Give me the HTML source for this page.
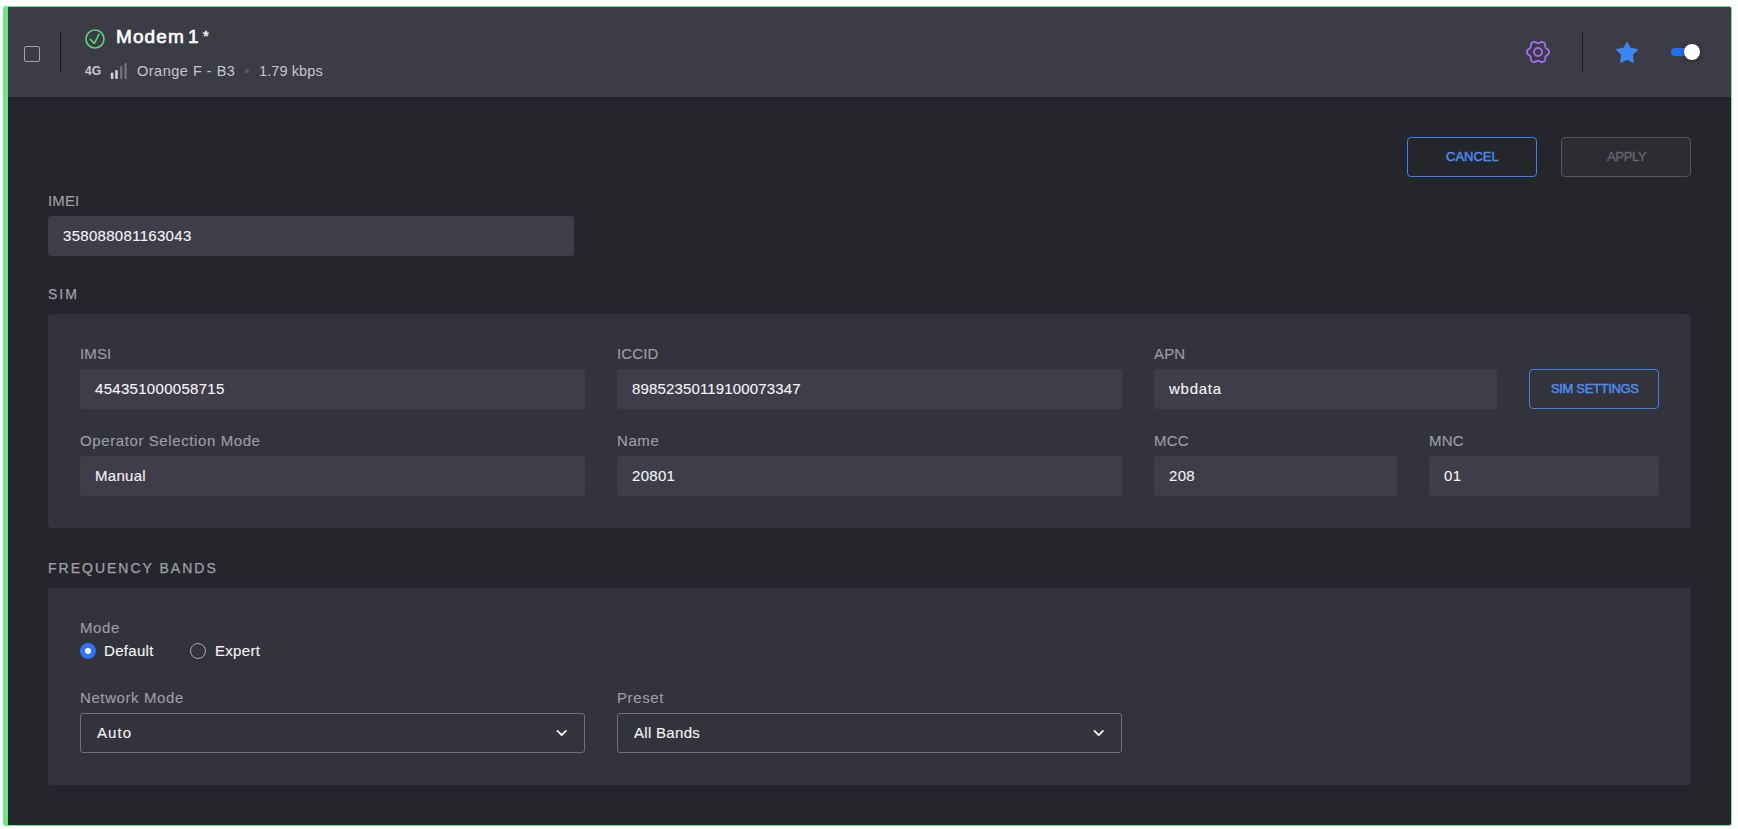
<!DOCTYPE html>
<html><head><meta charset="utf-8">
<style>
*{margin:0;padding:0;box-sizing:border-box}
html,body{width:1738px;height:829px;background:#fff;overflow:hidden;font-family:"Liberation Sans",sans-serif}
.a{position:absolute}
.t{position:absolute;white-space:nowrap;line-height:1}
#card{left:3px;top:6px;width:1729px;height:820px;border:1px solid #6de688;border-left:5px solid #6de688;border-radius:3px;background:#25262b;overflow:hidden}
#hdr{left:8px;top:7px;width:1723px;height:90px;background:#3c3c47;border-radius:0 2px 0 0}
.lbl{color:#9d9da5;font-size:15px;letter-spacing:0.6px;-webkit-text-stroke:0.15px #9d9da5}
.val{color:#f4f4f6;font-size:15px;letter-spacing:0.3px;-webkit-text-stroke:0.12px #f4f4f6}
.cap{letter-spacing:0.15px}
.inp{position:absolute;background:#3e3d49;border-radius:3px;height:40px}
.panel{position:absolute;background:#33333b;border-radius:4px}
.sel{position:absolute;border:1px solid #71717e;border-radius:3px;height:40px}
.btn{position:absolute;border:1px solid #3f82ec;border-radius:4px;height:40px}
.sec{color:#a0a0a8;font-size:14px;letter-spacing:2px;-webkit-text-stroke:0.25px #a0a0a8}
</style></head><body>
<div id="card" class="a"></div>
<div id="hdr" class="a"></div>

<!-- header -->
<div class="a" style="left:24px;top:46px;width:16px;height:16px;border:1px solid #a4a4ab;border-radius:2px"></div>
<div class="a" style="left:60px;top:32px;width:1px;height:40px;background:#1c1c20"></div>
<svg class="a" style="left:85px;top:29px" width="20" height="20" viewBox="0 0 20 20"><circle cx="10" cy="10" r="9" fill="none" stroke="#5fd57c" stroke-width="1.6"/><path d="M5.3 10.4 L9.3 14.4 L14 5.4" fill="none" stroke="#5fd57c" stroke-width="1.6" stroke-linecap="round" stroke-linejoin="round"/></svg>
<div class="t" style="left:116px;top:27px;font-size:19px;letter-spacing:1.1px;-webkit-text-stroke:0.65px #fff;color:#fff">Modem</div>
<div class="t" style="left:188px;top:27px;font-size:19px;-webkit-text-stroke:0.65px #fff;color:#fff">1</div>
<div class="t" style="left:203px;top:27.5px;font-size:15px;-webkit-text-stroke:0.4px #fff;color:#fff">*</div>
<div class="t" style="left:85px;top:65px;font-size:12px;font-weight:bold;color:#c9c9d1">4G</div>
<svg class="a" style="left:110px;top:62px" width="18" height="18" viewBox="0 0 18 18">
<rect x="0.8" y="10.5" width="2.6" height="6.5" rx="1" fill="#d0d0d8"/><rect x="5.2" y="8" width="2.6" height="9" rx="1" fill="#d0d0d8"/><rect x="10.1" y="4" width="2.2" height="13" rx="1" fill="#74747e"/><rect x="14.5" y="1" width="2.2" height="16" rx="1" fill="#74747e"/></svg>
<div class="t" style="left:137px;top:64px;font-size:14.5px;letter-spacing:0.5px;color:#c6c6d2">Orange F - B3</div>
<div class="a" style="left:245px;top:69px;width:4px;height:4px;border-radius:2px;background:#5c5c66"></div>
<div class="t" style="left:259px;top:64px;font-size:14.5px;letter-spacing:0.1px;color:#c6c6d2">1.79 kbps</div>

<svg class="a" style="left:1526px;top:40px" width="24" height="24" viewBox="0 0 24 24"><path fill="none" stroke="#a46ef0" stroke-width="1.8" d="M23.05 12.00 L23.04 11.71 L23.01 11.42 L22.95 11.14 L22.87 10.86 L22.77 10.58 L22.65 10.31 L22.50 10.05 L22.31 9.81 L22.07 9.58 L21.56 9.44 L21.39 9.22 L21.18 9.02 L20.94 8.83 L20.70 8.66 L20.47 8.49 L20.25 8.33 L20.04 8.16 L19.86 7.99 L19.71 7.82 L19.58 7.63 L19.48 7.42 L19.40 7.19 L19.34 6.95 L19.30 6.69 L19.27 6.42 L19.25 6.13 L19.21 5.84 L19.17 5.54 L19.11 5.26 L19.00 5.00 L19.13 4.49 L19.05 4.17 L18.93 3.88 L18.79 3.62 L18.62 3.38 L18.43 3.15 L18.22 2.95 L18.00 2.76 L17.77 2.58 L17.53 2.43 L17.27 2.30 L17.00 2.18 L16.73 2.08 L16.45 2.01 L16.16 1.96 L15.86 1.93 L15.56 1.94 L15.26 1.98 L14.94 2.07 L14.56 2.44 L14.29 2.47 L14.01 2.56 L13.73 2.67 L13.46 2.79 L13.20 2.91 L12.94 3.02 L12.70 3.12 L12.46 3.19 L12.23 3.23 L12.00 3.25 L11.77 3.23 L11.54 3.19 L11.30 3.12 L11.06 3.02 L10.80 2.91 L10.54 2.79 L10.27 2.67 L9.99 2.56 L9.71 2.47 L9.44 2.44 L9.06 2.07 L8.74 1.98 L8.44 1.94 L8.14 1.93 L7.84 1.96 L7.55 2.01 L7.27 2.08 L7.00 2.18 L6.73 2.30 L6.48 2.43 L6.23 2.58 L6.00 2.76 L5.78 2.95 L5.57 3.15 L5.38 3.38 L5.21 3.62 L5.07 3.88 L4.95 4.17 L4.87 4.49 L5.00 5.00 L4.89 5.26 L4.83 5.54 L4.79 5.84 L4.75 6.13 L4.73 6.42 L4.70 6.69 L4.66 6.95 L4.60 7.19 L4.52 7.42 L4.42 7.63 L4.29 7.82 L4.14 7.99 L3.96 8.16 L3.75 8.33 L3.53 8.49 L3.30 8.66 L3.06 8.83 L2.82 9.02 L2.61 9.22 L2.44 9.44 L1.93 9.58 L1.69 9.81 L1.50 10.05 L1.35 10.31 L1.23 10.58 L1.13 10.86 L1.05 11.14 L0.99 11.42 L0.96 11.71 L0.95 12.00 L0.96 12.29 L0.99 12.58 L1.05 12.86 L1.13 13.14 L1.23 13.42 L1.35 13.69 L1.50 13.95 L1.69 14.19 L1.93 14.42 L2.44 14.56 L2.61 14.78 L2.82 14.98 L3.06 15.17 L3.30 15.34 L3.53 15.51 L3.75 15.67 L3.96 15.84 L4.14 16.01 L4.29 16.18 L4.42 16.37 L4.52 16.58 L4.60 16.81 L4.66 17.05 L4.70 17.31 L4.73 17.58 L4.75 17.87 L4.79 18.16 L4.83 18.46 L4.89 18.74 L5.00 19.00 L4.87 19.51 L4.95 19.83 L5.07 20.12 L5.21 20.38 L5.38 20.62 L5.57 20.85 L5.78 21.05 L6.00 21.24 L6.23 21.42 L6.47 21.57 L6.73 21.70 L7.00 21.82 L7.27 21.92 L7.55 21.99 L7.84 22.04 L8.14 22.07 L8.44 22.06 L8.74 22.02 L9.06 21.93 L9.44 21.56 L9.71 21.53 L9.99 21.44 L10.27 21.33 L10.54 21.21 L10.80 21.09 L11.06 20.98 L11.30 20.88 L11.54 20.81 L11.77 20.77 L12.00 20.75 L12.23 20.77 L12.46 20.81 L12.70 20.88 L12.94 20.98 L13.20 21.09 L13.46 21.21 L13.73 21.33 L14.01 21.44 L14.29 21.53 L14.56 21.56 L14.94 21.93 L15.26 22.02 L15.56 22.06 L15.86 22.07 L16.16 22.04 L16.45 21.99 L16.73 21.92 L17.00 21.82 L17.27 21.70 L17.53 21.57 L17.77 21.42 L18.00 21.24 L18.22 21.05 L18.43 20.85 L18.62 20.62 L18.79 20.38 L18.93 20.12 L19.05 19.83 L19.13 19.51 L19.00 19.00 L19.11 18.74 L19.17 18.46 L19.21 18.16 L19.25 17.87 L19.27 17.58 L19.30 17.31 L19.34 17.05 L19.40 16.81 L19.48 16.58 L19.58 16.37 L19.71 16.18 L19.86 16.01 L20.04 15.84 L20.25 15.67 L20.47 15.51 L20.70 15.34 L20.94 15.17 L21.18 14.98 L21.39 14.78 L21.56 14.56 L22.07 14.42 L22.31 14.19 L22.50 13.95 L22.65 13.69 L22.77 13.42 L22.87 13.14 L22.95 12.86 L23.01 12.58 L23.04 12.29 Z"/><circle cx="12" cy="12" r="4" fill="none" stroke="#a46ef0" stroke-width="1.8"/></svg>
<div class="a" style="left:1582px;top:32px;width:1px;height:40px;background:#1c1c20"></div>
<svg class="a" style="left:1615px;top:41px" width="24" height="23" viewBox="0 0 24 23"><path d="M12 1.6 L15.1 7.2 L22.4 8.7 L17.3 13.8 L18.3 21.3 L12 18.1 L5.7 21.3 L6.7 13.8 L1.6 8.7 L8.9 7.2 Z" fill="#3d86ef" stroke="#3d86ef" stroke-width="1.2" stroke-linejoin="round"/></svg>
<div class="a" style="left:1671px;top:48px;width:22px;height:8px;border-radius:4px;background:#1f6ff2"></div>
<div class="a" style="left:1684px;top:44px;width:16px;height:16px;border-radius:8px;background:#fff;box-shadow:0 1px 4px rgba(0,0,0,.45)"></div>

<!-- buttons -->
<div class="btn" style="left:1407px;top:137px;width:130px"></div>
<div class="t" style="left:1446px;top:150px;font-size:13px;-webkit-text-stroke:0.45px #4a8cf5;color:#4a8cf5">CANCEL</div>
<div class="btn" style="left:1561px;top:137px;width:130px;border-color:#56565d;background:#2c2c31"></div>
<div class="t" style="left:1607px;top:150px;font-size:13px;letter-spacing:-0.3px;-webkit-text-stroke:0.45px #63636b;color:#63636b">APPLY</div>

<!-- IMEI -->
<div class="t lbl cap" style="left:48px;top:193px">IMEI</div>
<div class="inp" style="left:48px;top:216px;width:526px"></div>
<div class="t val" style="left:63px;top:228px">358088081163043</div>

<div class="t sec" style="left:48px;top:287px">SIM</div>
<div class="panel" style="left:48px;top:314px;width:1643px;height:214px"></div>
<div class="t lbl cap" style="left:80px;top:346px">IMSI</div>
<div class="inp" style="left:80px;top:369px;width:505px"></div>
<div class="t val" style="left:95px;top:381px">454351000058715</div>
<div class="t lbl cap" style="left:617px;top:346px">ICCID</div>
<div class="inp" style="left:617px;top:369px;width:505px"></div>
<div class="t val" style="left:632px;top:381px;letter-spacing:0.15px">89852350119100073347</div>
<div class="t lbl cap" style="left:1154px;top:346px">APN</div>
<div class="inp" style="left:1154px;top:369px;width:343px"></div>
<div class="t val" style="left:1169px;top:381px;letter-spacing:0.75px">wbdata</div>
<div class="btn" style="left:1529px;top:369px;width:130px"></div>
<div class="t" style="left:1551px;top:382px;font-size:13px;letter-spacing:-0.35px;-webkit-text-stroke:0.45px #4c8ef8;color:#4c8ef8">SIM SETTINGS</div>

<div class="t lbl" style="left:80px;top:433px">Operator Selection Mode</div>
<div class="inp" style="left:80px;top:456px;width:505px"></div>
<div class="t val" style="left:95px;top:468px">Manual</div>
<div class="t lbl" style="left:617px;top:433px">Name</div>
<div class="inp" style="left:617px;top:456px;width:505px"></div>
<div class="t val" style="left:632px;top:468px">20801</div>
<div class="t lbl cap" style="left:1154px;top:433px">MCC</div>
<div class="inp" style="left:1154px;top:456px;width:243px"></div>
<div class="t val" style="left:1169px;top:468px">208</div>
<div class="t lbl cap" style="left:1429px;top:433px">MNC</div>
<div class="inp" style="left:1429px;top:456px;width:230px"></div>
<div class="t val" style="left:1444px;top:468px">01</div>

<!-- frequency -->
<div class="t sec" style="left:48px;top:561px">FREQUENCY BANDS</div>
<div class="panel" style="left:48px;top:588px;width:1643px;height:197px"></div>
<div class="t lbl" style="left:80px;top:620px">Mode</div>
<div class="a" style="left:80px;top:643px;width:16px;height:16px;border-radius:8px;background:#2f74f0"></div>
<div class="a" style="left:85px;top:648px;width:6px;height:6px;border-radius:3px;background:#fff"></div>
<div class="t val" style="left:104px;top:643px">Default</div>
<div class="a" style="left:190px;top:643px;width:16px;height:16px;border-radius:8px;border:1px solid #a8a8b0"></div>
<div class="t val" style="left:215px;top:643px">Expert</div>

<div class="t lbl" style="left:80px;top:690px">Network Mode</div>
<div class="sel" style="left:80px;top:713px;width:505px"></div>
<div class="t val" style="left:97px;top:725px;letter-spacing:1.1px">Auto</div>
<svg class="a" style="left:555px;top:727px" width="14" height="12" viewBox="0 0 14 12"><path d="M2.5 3.9 L6.7 8.1 L10.9 3.9" fill="none" stroke="#f4f4f4" stroke-width="1.9" stroke-linecap="round" stroke-linejoin="round"/></svg>
<div class="t lbl" style="left:617px;top:690px">Preset</div>
<div class="sel" style="left:617px;top:713px;width:505px"></div>
<div class="t val" style="left:634px;top:725px">All Bands</div>
<svg class="a" style="left:1092px;top:727px" width="14" height="12" viewBox="0 0 14 12"><path d="M2.5 3.9 L6.7 8.1 L10.9 3.9" fill="none" stroke="#f4f4f4" stroke-width="1.9" stroke-linecap="round" stroke-linejoin="round"/></svg>
</body></html>
